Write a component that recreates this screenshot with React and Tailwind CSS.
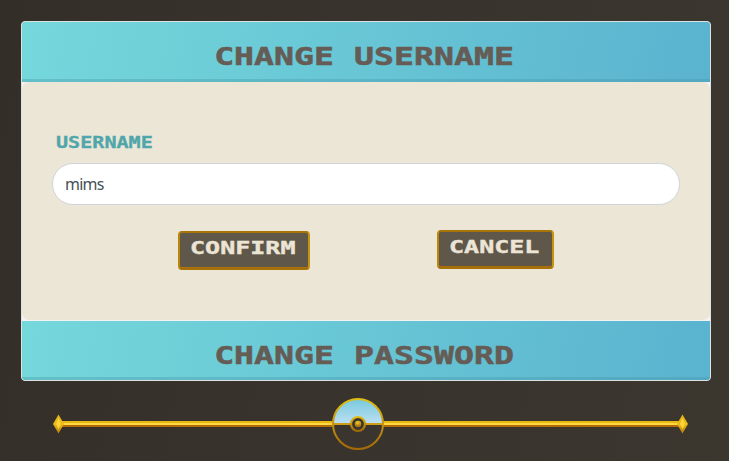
import React from "react";

function PixelText({ className = "", children }) {
  return (
    <span className={`inline-block whitespace-pre font-bold leading-none font-['DejaVu_Sans_Mono',monospace] ${className}`}>
      {children}
    </span>
  );
}

function Header({ className = "", children }) {
  return (
    <div className={`flex shrink-0 justify-center bg-linear-[100deg] from-[#75d8db] to-[#5ab3cf] pr-[3px] shadow-[inset_0_-3px_0_rgba(70,150,165,0.35)] ${className}`}>
      <PixelText className="scale-x-[1.35] text-[24.6px] text-[#655c55] [-webkit-text-stroke:0.5px_#655c55]">{children}</PixelText>
    </div>
  );
}

function GoldButton({ className = "", children }) {
  return (
    <button
      className={`flex h-[39px] shrink-0 justify-center rounded-[4px] border-2 border-b-3 border-t-[#a87405] border-r-[#c89410] border-b-[#a87008] border-l-[#b98609] bg-[#60574b] pt-[6px] pr-[3px] ${className}`}
    >
      <PixelText className="scale-x-[1.36] text-[18.4px] text-[#ece5d6] [-webkit-text-stroke:0.4px_#ece5d6]">{children}</PixelText>
    </button>
  );
}

function Divider() {
  return (
    <svg className="mt-[16px] ml-[52px] block" width="637" height="54" viewBox="52 397 637 54">
      <defs>
        <linearGradient id="ring" x1="0" y1="0" x2="0" y2="1">
          <stop offset="0" stopColor="#e2bf13" />
          <stop offset="0.5" stopColor="#c39211" />
          <stop offset="1" stopColor="#a36807" />
        </linearGradient>
        <linearGradient id="sky" x1="0" y1="0" x2="0" y2="1">
          <stop offset="0" stopColor="#78c9dc" />
          <stop offset="1" stopColor="#bde0f3" />
        </linearGradient>
        <linearGradient id="gem" x1="0" y1="0" x2="0" y2="1">
          <stop offset="0" stopColor="#e4b112" />
          <stop offset="0.5" stopColor="#eebb1c" />
          <stop offset="1" stopColor="#b67b08" />
        </linearGradient>
      </defs>
      <rect x="60" y="421" width="622" height="2" fill="#eab813" />
      <rect x="60" y="423" width="622" height="2" fill="#ffd942" />
      <rect x="60" y="425" width="622" height="2" fill="#b26c05" />
      <circle cx="358" cy="424" r="25" fill="#3a362f" />
      <path d="M333 424a25 25 0 0 1 50 0z" fill="url(#sky)" />
      <rect x="333" y="423" width="50" height="2" fill="#cf9c15" />
      <circle cx="358" cy="424" r="25" fill="none" stroke="url(#ring)" strokeWidth="2" />
      <circle cx="358" cy="424" r="7" fill="#3a362f" stroke="url(#ring)" strokeWidth="2.2" />
      <circle cx="358" cy="424" r="3.2" fill="url(#ring)" />
      <circle cx="357.7" cy="423.3" r="1.2" fill="#e5bd3c" />
      <path d="M58.5 414.5 64 424 58.5 433.5 53 424z" fill="url(#gem)" />
      <path d="M58.5 418 61 424 58.5 429 56 424z" fill="#ffd436" />
      <path d="M682.5 414.5 688 424 682.5 433.5 677 424z" fill="url(#gem)" />
      <path d="M682.5 418 685 424 682.5 429 680 424z" fill="#ffd436" />
    </svg>
  );
}

export default function App() {
  return (
    <main className="h-[461px] w-[729px] overflow-hidden bg-linear-[100deg] from-[#342e29] via-[#38342d] to-[#3b372f] pt-[21px]">
      <section className="ml-[21px] flex h-[360px] w-[690px] flex-col overflow-hidden rounded-[4px] border border-[#dce2e2] bg-[#f3f3f3]">
        <Header className="h-[60px] pt-[23px]">CHANGE USERNAME</Header>
        <div className="flex h-[238px] shrink-0 flex-col rounded-[7px] bg-[#ece6d7] pr-[30px] pl-[30px]">
          <label className="mt-[54px] ml-[4px] flex h-[16px]">
            <PixelText className="origin-left scale-x-[1.34] text-[15px] text-[#51a6ab] [-webkit-text-stroke:0.3px_#51a6ab]">USERNAME</PixelText>
          </label>
          <input
            className="mt-[11px] h-[42px] w-full shrink-0 rounded-full border border-[#ced4da] bg-white px-3 font-['Noto_Sans',sans-serif] text-[16px] tracking-[-0.8px] text-[#495057] outline-none"
            defaultValue="mims"
          />
          <div className="mt-[25px] flex pl-[126px]">
            <GoldButton className="mt-px w-[132px]">CONFIRM</GoldButton>
            <GoldButton className="ml-[127px] w-[117px]">CANCEL</GoldButton>
          </div>
        </div>
        <Header className="mt-px h-[59px] pt-[23px]">CHANGE PASSWORD</Header>
      </section>
      <Divider />
    </main>
  );
}
